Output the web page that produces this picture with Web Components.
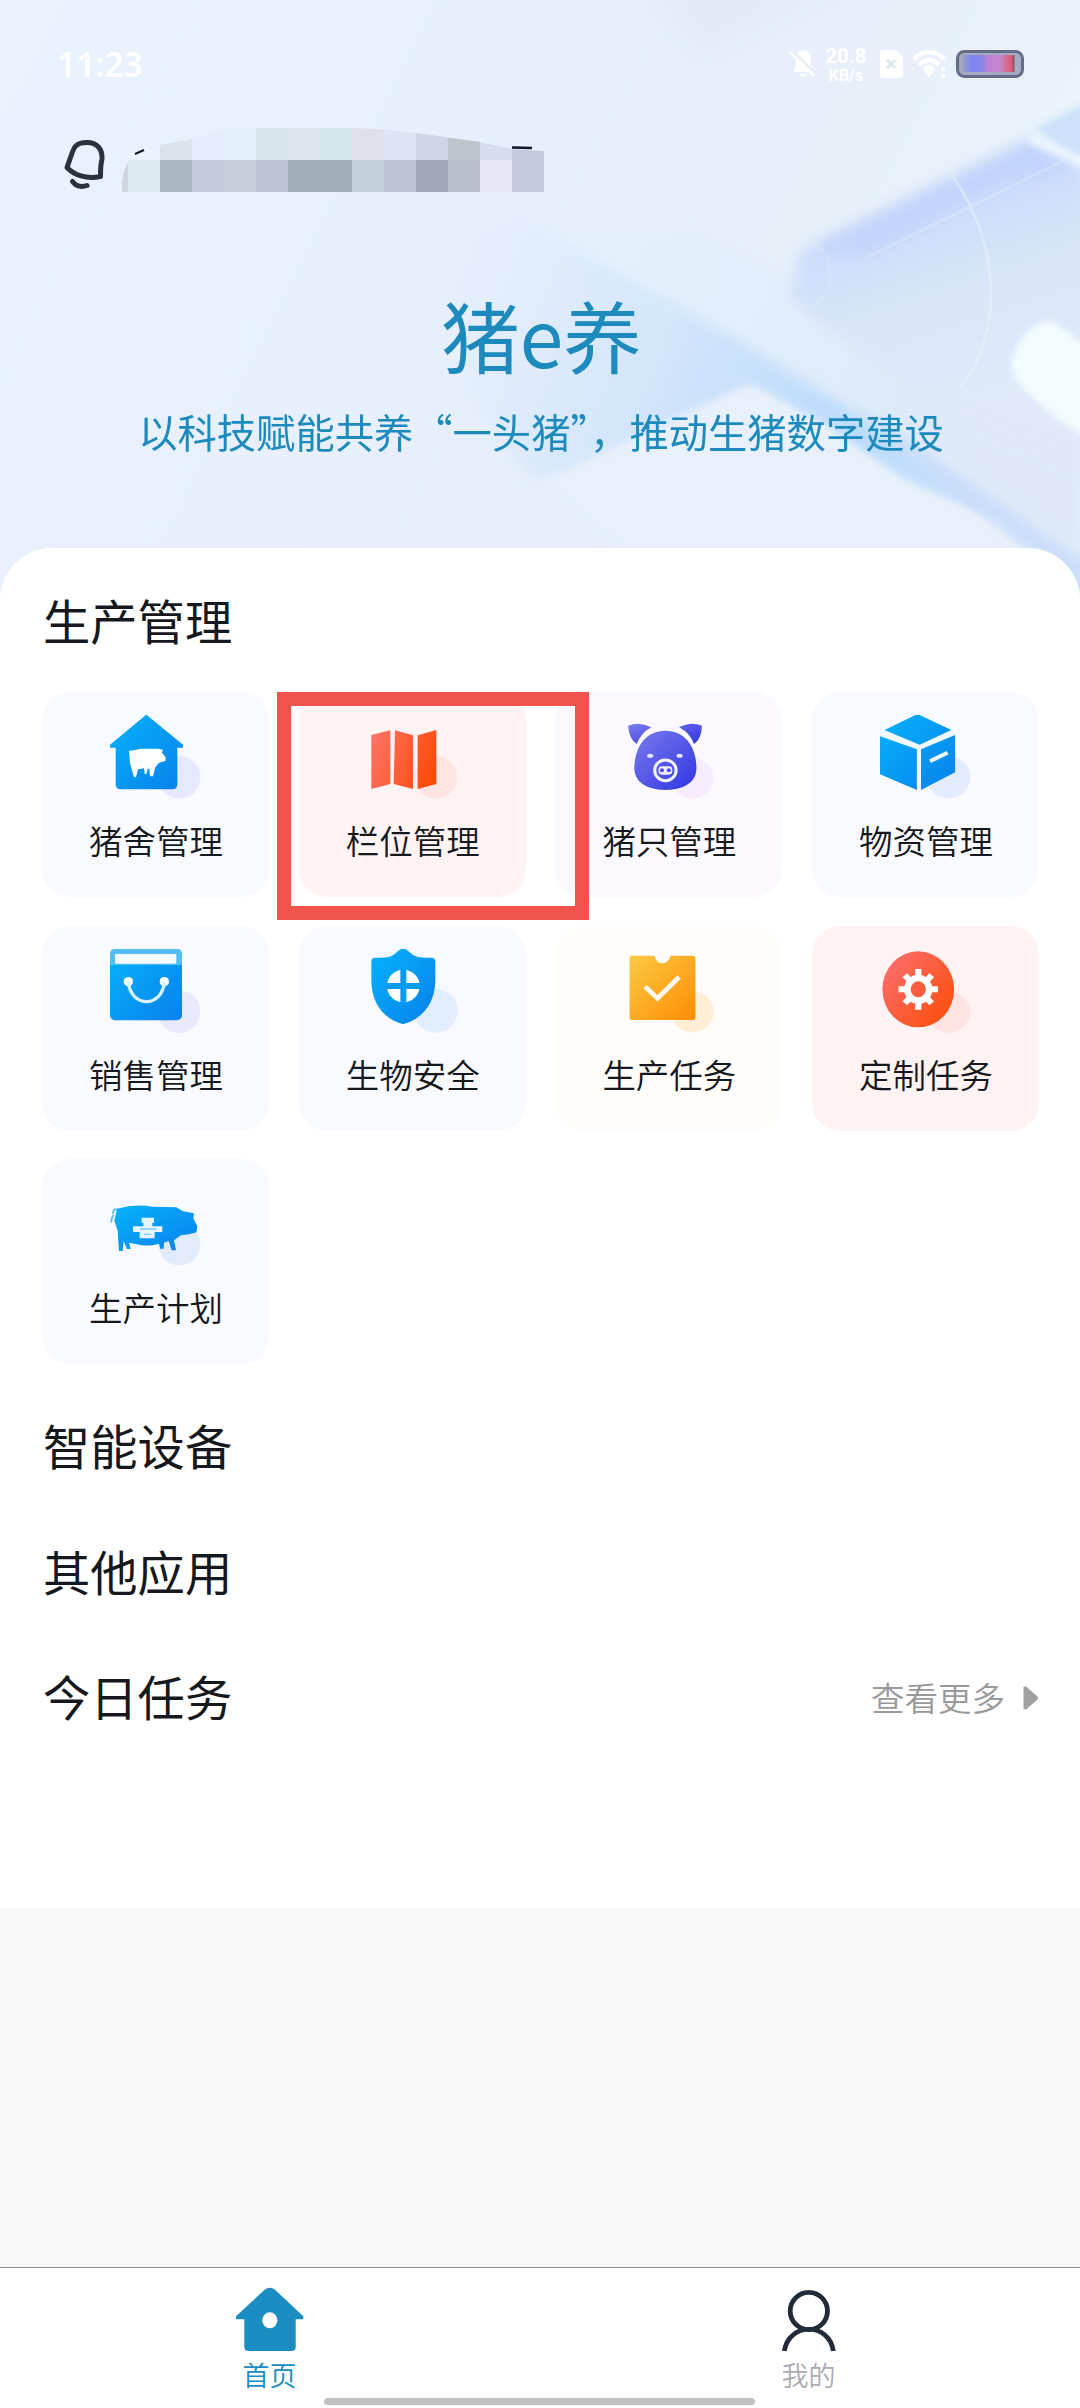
<!DOCTYPE html>
<html lang="zh-CN">
<head>
<meta charset="utf-8">
<title>猪e养</title>
<style>
html,body{margin:0;padding:0;background:#fff}
body{width:1080px;height:2408px;overflow:hidden;font-family:"Noto Sans CJK SC",sans-serif;color:#15181c}
</style>
</head>
<body>
<home-page></home-page>
<script>
const define=(name,html)=>customElements.define(name,class extends HTMLElement{
  constructor(){super();const t=document.createElement('template');t.innerHTML=html;
    this.attachShadow({mode:'open'}).append(t.content.cloneNode(true));}
});

define('hero-backdrop',`<style>:host{display:block;position:absolute;inset:0;z-index:0}svg{display:block}</style>
<svg width="1080" height="620" viewBox="0 0 1080 620">
<defs>
<linearGradient id="b" x1="0" x2="1" y2=".3"><stop offset="0" stop-color="#eaf2fd"/><stop offset=".55" stop-color="#e8effc"/><stop offset=".8" stop-color="#e8eff9"/><stop offset="1" stop-color="#e9f5fa"/></linearGradient>
<linearGradient id="r" gradientUnits="userSpaceOnUse" x1="420" y1="250" x2="1040" y2="520"><stop offset="0" stop-color="#dcecfc" stop-opacity="0"/><stop offset=".35" stop-color="#d3e6fc" stop-opacity=".9"/><stop offset=".7" stop-color="#b8dafb"/><stop offset="1" stop-color="#d6e4fa"/></linearGradient>
<linearGradient id="p" gradientUnits="userSpaceOnUse" x1="930" y1="190" x2="1000" y2="400"><stop offset="0" stop-color="#c9dafc"/><stop offset=".45" stop-color="#d8e5f8"/><stop offset="1" stop-color="#dfe9f9"/></linearGradient>
<linearGradient id="q" gradientUnits="userSpaceOnUse" x1="640" y1="230" x2="1000" y2="440"><stop offset="0" stop-color="#e4f0fc"/><stop offset="1" stop-color="#dce8f8"/></linearGradient>
<filter id="f1" x="-10%" y="-10%" width="120%" height="120%"><feGaussianBlur stdDeviation="3"/></filter>
<filter id="f3" x="-10%" y="-10%" width="120%" height="120%"><feGaussianBlur stdDeviation="7"/></filter>
<filter id="f2" x="-20%" y="-20%" width="140%" height="140%"><feGaussianBlur stdDeviation="14"/></filter>
</defs>
<rect width="1080" height="620" fill="url(#b)"/>
<path d="M640-20H860L700 60Z" fill="#e2ebf5" filter="url(#f2)"/>
<path d="M530 220L700 226 770 265 1080 430V580L900 450 600 290Z" fill="url(#q)" filter="url(#f3)"/>
<path d="M1090 100L1035 128 1080 165H1090Z" fill="#cde2fa" filter="url(#f1)"/>
<path d="M1030 140L1090 172V480L1000 450 790 300 800 252Z" fill="url(#p)" filter="url(#f3)"/>
<path d="M1030 140L1078 168 1050 172 990 190 870 256 808 248Z" fill="#bccffb" opacity=".55" filter="url(#f3)"/>
<path d="M440 240L520 215 600 262 730 335 1090 560V600L810 420 750 386 680 420 560 477 530 478 470 400Z" fill="url(#r)" filter="url(#f3)"/>
<path d="M750 386L830 428 900 480 1000 520 1090 600V620H700L545 482 680 418Z" fill="#e8f0fb" filter="url(#f1)"/>
<path d="M850 400L1090 565V600L960 500Z" fill="#c9ddfa" opacity=".7" filter="url(#f1)"/>
<path d="M960 420L1090 470V560L900 430Z" fill="#dfe9f9" opacity=".8" filter="url(#f3)"/>
<path d="M1050 320C1030 325 1010 345 1012 372 1030 402 1060 420 1090 440V348Z" fill="#f5fbfe" filter="url(#f1)"/>
<path d="M1030 138L1090 165" stroke="#eef7fe" stroke-width="8" filter="url(#f1)"/>
<g fill="none" stroke="#eaf3fd" stroke-width="3" opacity=".5"><path d="M952 175C1000 245 1005 330 960 388"/><path d="M1065 160L865 258" opacity=".5"/><ellipse cx="808" cy="275" rx="22" ry="32" opacity=".35"/></g>
</svg>`);

define('status-bar',`<style>
:host{display:flex;align-items:center;height:64px;padding:32px 56px 0 57px;color:#fff;font-family:"Noto Sans","Open Sans",sans-serif}
.time{font-size:33.5px;font-weight:600;line-height:64px;flex:1}
.icons{display:flex;align-items:center}
.net{display:flex;flex-direction:column;align-items:center;width:46px;margin:3px 9px 0 6px;font-family:Roboto,sans-serif;font-weight:700;font-size:20.500px;line-height:20.500px}
.net span+span{font-size:16px;line-height:18px}
svg{display:block}
</style>
<span class="time">11:23</span>
<span class="icons">
<svg width="28" height="30" viewBox="0 0 28 30"><path d="M14 1c5 0 8 4 8 9v9l3 4H4l3-5v-8c0-5 3-9 7-9zM11 25h6c0 4-6 4-6 0z" fill="#fff"/><path d="M3 1L27 25" stroke="#e7eef9" stroke-width="2.500"/><path d="M1 3L25 27" stroke="#fff" stroke-width="2"/></svg>
<span class="net"><span>20.8</span><span>KB/s</span></span>
<svg width="26" height="30" viewBox="0 0 26 30"><path d="M5 1h13l7 7v18q0 3-3 3H5q-3 0-3-3V4q0-3 3-3z" fill="#fff"/><path d="M9 11l8 8m0-8l-8 8" stroke="#dfe6f2" stroke-width="3"/></svg>
<svg width="36" height="30" viewBox="0 0 36 30" style="margin-left:8px"><path d="M2 10Q17-4 32 10M7 16Q17 6 27 16M12 21Q17 16 22 21" fill="none" stroke="#fff" stroke-width="4.500"/><path d="M12 22h10l-5 6zM29 18h4v4h-4zM29 25h4v4h-4z" fill="#fff"/></svg>
<svg width="68" height="28" viewBox="0 0 68 28" style="margin-left:8px"><defs><linearGradient id="g"><stop offset="0" stop-color="#9aa4c8"/><stop offset=".2" stop-color="#7b83f0"/><stop offset=".4" stop-color="#8d83e6"/><stop offset=".5" stop-color="#bd83da"/><stop offset=".75" stop-color="#c884c8"/><stop offset="1" stop-color="#e05560"/></linearGradient></defs><rect x="1.500" y="1.500" width="65" height="25" rx="7" fill="#a3aac2" stroke="#656d86" stroke-width="3"/><rect x="6" y="5" width="51" height="17" rx="2" fill="url(#g)"/><path d="M57.500 5v17" stroke="#87566f" stroke-width="2"/></svg>
</span>`);

define('user-line',`<style>:host{display:block;height:100px;padding:14px 0 0 40px}svg{display:block}</style>
<svg width="520" height="100" viewBox="0 0 520 100">
<g fill="none" stroke="#2b323f" stroke-width="5" stroke-linecap="round" stroke-linejoin="round"><path d="M31 46C34 36.500 36 32.500 47 32.500 58 32.500 62.500 40 62 49 61 53 60.500 58 60.500 66.500 46 69.500 34 65 27 57.500Z"/><path d="M32.500 71.500C36 76 41 77.500 47 75.500"/></g>
<defs><clipPath id="c"><path d="M82 82V72Q83 60 90 49L120 35 152 29 184 19 216 18H312L344 19.500 376 23 440 32 472 39 504 41V82Z"/></clipPath></defs>
<g clip-path="url(#c)" shape-rendering="crispEdges" id="m"></g>
<path d="M95 44L104 40" stroke="#111827" stroke-width="2"/><path d="M472 37.500L492 38" stroke="#111827" stroke-width="2.600"/>
</svg>`);
/* 32px blocks that hide the account name, two rows */
class NameMosaic extends customElements.get('user-line'){constructor(){super();
  const g=this.shadowRoot.getElementById('m');
  const rows=[['#eaf2fd','#d9e4eb','#e7ecfc','#e4f1fd','#d6e5ec','#dee4ed','#d4e6eb','#dfe0eb','#dde5f5','#cfd4e6','#bfc4cc','#d8dcef','#c7cade'],
              ['#dceaf2','#abb7c3','#c4cddd','#c4cfdb','#bbc3d4','#a2aeba','#a2aeba','#c3cfdb','#bcc4d5','#a0a9ba','#bbbfcb','#e6e9f5','#c7cade']];
  let s='<rect x="80" y="50" width="8" height="32" fill="#cfd6e0"/>';
  rows.forEach((r,j)=>r.forEach((c,i)=>s+=`<rect x="${88+i*32}" y="${18+j*32}" width="32" height="32" fill="${c}"/>`));
  g.innerHTML=s;}}
customElements.define('account-line',NameMosaic);

define('hero-title',`<style>
:host{display:flex;flex-direction:column;align-items:center;color:#1c8abc}
.t{font-size:78.500px;line-height:110px;margin:69px 0 0 3px;font-weight:400}
.s{font-size:39.300px;line-height:60px;margin:12px 0 0 2px;white-space:nowrap}
</style><div class="t"><slot name="title"></slot></div><div class="s"><slot></slot></div>`);

define('app-tile',`<style>
:host{display:flex;flex-direction:column;align-items:center;box-sizing:border-box;height:205px;padding-top:23px;border-radius:28px;background:var(--bg,#f9faff);font-size:33.500px;line-height:48px;font-weight:350}
.i{width:91px;height:84px}.l{margin:17px 0 0 1px;white-space:nowrap}
</style><div class="i"><slot name="icon"></slot></div><div class="l"><slot></slot></div>`);

define('section-head',`<style>
:host{display:flex;align-items:center;justify-content:space-between;height:70px;font-size:47.300px;line-height:70px}
.h{margin:-4px 0 0 1px}
</style><span class="h"><slot></slot></span><slot name="more"></slot>`);

define('more-link',`<style>:host{display:flex;align-items:center;gap:18px;font-size:33.500px;line-height:48px;color:#999;font-weight:350}svg{display:block}span{margin-top:-3px}</style>
<span><slot></slot></span><svg width="16" height="24" viewBox="0 0 16 24"><path d="M.5 1Q1 .5 3 .5L14 10Q16 12 14 14L3 23.500.5 23Z" fill="#a0a0a0"/></svg>`);

define('nav-item',`<style>:host{display:flex;flex:1;flex-direction:column;align-items:center;font-size:27px;line-height:38px;font-weight:350;padding-top:19px}
.i{height:65px}.l{margin-top:4px}</style><div class="i"><slot name="icon"></slot></div><div class="l"><slot></slot></div>`);

define('home-page',`<style>
:host{display:flex;flex-direction:column;position:relative;width:1080px;height:2408px;background:#f8f8f8;overflow:hidden}
header{position:relative;height:548px;flex:none}
.over{position:relative;z-index:1}
main{position:relative;z-index:1;box-sizing:border-box;height:1360px;flex:none;background:#fff;border-radius:52px 52px 0 0;padding:39px 41px 0 42px}
.grid{position:relative;display:grid;grid-template-columns:repeat(4,227px);column-gap:29.700px;row-gap:28.500px;margin:35px 0 48px}
.mark{position:absolute;left:235px;top:0;box-sizing:border-box;width:312px;height:228px;border:14px solid #f0524c;z-index:2}
.heads{display:flex;flex-direction:column;gap:55.500px}
.fill{flex:1}
nav{display:flex;box-sizing:border-box;height:141px;flex:none;background:#fff;border-top:1px solid #8f9096;position:relative;padding-right:2px}
.pill{position:absolute;left:324px;top:130px;width:431px;height:7px;border-radius:4px;background:#c1c1c4}
svg{display:block}
</style>
<header><hero-backdrop></hero-backdrop><div class="over"><status-bar></status-bar><account-line></account-line>
<hero-title><span slot="title">猪e养</span>以科技赋能共养“一头猪”，推动生猪数字建设</hero-title></div></header>
<main>
<svg width="0" height="0" style="position:absolute"><defs>
<linearGradient id="blue" x1="0" y1="0" x2="1" y2="1"><stop offset="0" stop-color="#05b3fb"/><stop offset="1" stop-color="#0880ec"/></linearGradient>
<linearGradient id="red" gradientUnits="userSpaceOnUse" x1="1055" y1="200" x2="1250" y2="270"><stop offset="0" stop-color="#fd7263"/><stop offset="1" stop-color="#fd4a08"/></linearGradient>
<linearGradient id="red2" x1="0" y1=".2" x2="1" y2="1"><stop offset="0" stop-color="#fb6d6b"/><stop offset="1" stop-color="#fd4b02"/></linearGradient>
<linearGradient id="vio" x1="0" y1="0" x2="1" y2="1"><stop offset="0" stop-color="#7a7bed"/><stop offset="1" stop-color="#2f35e2"/></linearGradient>
<linearGradient id="ora" x1="0" y1="0" x2="1" y2="1"><stop offset="0" stop-color="#fdc945"/><stop offset="1" stop-color="#fd8d02"/></linearGradient>
</defs></svg>
<section-head>生产管理</section-head>
<div class="grid">
<app-tile><svg slot="icon" width="91" height="84" viewBox="273 105 273 252" preserveAspectRatio="none"><circle cx="480" cy="292" r="64" fill="#e5e8fe"/><path d="M382 104L492 194V203H475V312Q475 328 460 328H305Q290 328 290 312V203H273V194Z" fill="url(#blue)"/><path d="M330 212Q345 212 365 206H418L432 210 428 217 440 232 439 243 420 248 409 262 402 289H393L391 266H386L382 283 377 281 375 265 357 268 351 292H345L333 250Z" fill="#fff"/></svg>猪舍管理</app-tile>
<app-tile style="--bg:#fff3f3"><svg slot="icon" width="91" height="84" viewBox="1044 105 273 252" preserveAspectRatio="none"><circle cx="1250" cy="292" r="64" fill="#ffe4e2"/><path d="M1057 165L1114 151V312L1057 327ZM1128 151L1182 166V327L1124 312ZM1196 166L1252 150V312L1196 327Z" fill="url(#red)"/></svg>栏位管理</app-tile>
<app-tile style="--bg:#fcf8ff"><svg slot="icon" width="91" height="84" viewBox="247 105 264 252" preserveAspectRatio="none"><circle cx="448" cy="295" r="61" fill="#f6ebff"/><path d="M262 137Q295 123 329 142Q298 160 287 192Q264 176 262 137ZM476 137Q444 123 410 142Q442 160 453 192Q475 176 476 137Z" fill="url(#vio)"/><path d="M370 152C430 152 460 205 460 265C460 312 415 330 370 330S280 312 280 265C280 205 310 152 370 152Z" fill="url(#vio)"/><circle cx="370" cy="271" r="31" fill="none" stroke="#f2efff" stroke-width="9"/><rect x="350" y="259" width="40" height="25" rx="10" fill="#eeecff"/><circle cx="360" cy="271" r="6" fill="#4c4fe2"/><circle cx="380" cy="271" r="6" fill="#4c4fe2"/><ellipse cx="326" cy="227" rx="9" ry="6" fill="#e8e6ff"/><ellipse cx="411" cy="227" rx="9" ry="6" fill="#e8e6ff"/></svg>猪只管理</app-tile>
<app-tile><svg slot="icon" width="91" height="84" viewBox="993 105 264 252" preserveAspectRatio="none"><circle cx="1192" cy="292" r="63" fill="#e5ebfe"/><path d="M993 158L1102 102 1211 158V277L1116 331H1096L993 283Z" fill="#eff7ff"/><path d="M1102 102L1200 150 1108 194 1006 150ZM993 169L1100 208V330L993 283ZM1112 208L1211 165V277L1112 330Z" fill="url(#blue)"/><path d="M1138 244L1189 218" stroke="#eef7ff" stroke-width="12"/></svg>物资管理</app-tile>
<app-tile><svg slot="icon" width="91" height="84" viewBox="273 117 273 252" preserveAspectRatio="none"><circle cx="480" cy="305" r="64" fill="#e9e8fe"/><rect x="273" y="117" width="216" height="214" rx="16" fill="url(#blue)"/><path d="M289 117H473Q489 117 489 133V165H273V133Q273 117 289 117Z" fill="#55bdf4"/><rect x="288" y="132" width="184" height="29" rx="4" fill="#f2faff"/><g fill="#fff"><circle cx="328" cy="215" r="14"/><circle cx="436" cy="215" r="14"/></g><path d="M328 215C335 295 430 295 436 215" fill="none" stroke="#d9f2ff" stroke-width="10"/></svg>销售管理</app-tile>
<app-tile><svg slot="icon" width="91" height="84" viewBox="1044 117 273 252" preserveAspectRatio="none"><circle cx="1250" cy="302" r="66" fill="#e2edff"/><path d="M1152 114Q1164 118 1179 133 1196 146 1240 143 1249 144 1249 155V210C1249 285 1205 328 1152 343C1099 328 1057 285 1057 210V155Q1057 144 1066 143 1111 146 1126 133 1141 118 1152 114Z" fill="url(#blue)"/><circle cx="1153" cy="228" r="49" fill="#fff"/><path d="M1153 176V280M1101 228H1205" stroke="#0b9bf4" stroke-width="18"/></svg>生物安全</app-tile>
<app-tile style="--bg:#fffdf9"><svg slot="icon" width="91" height="84" viewBox="247 117 264 252" preserveAspectRatio="none"><circle cx="448" cy="305" r="62" fill="#ffedd6"/><path d="M272 137H338Q345 160 361 160T385 137H450Q457 137 457 144V323Q457 330 450 330H272Q266 330 266 323V144Q266 137 272 137Z" fill="url(#ora)"/><path d="M311 230L347 265 410 201" fill="none" stroke="#fffaf0" stroke-width="14"/></svg>生产任务</app-tile>
<app-tile style="--bg:#fff2f2"><svg slot="icon" width="91" height="84" viewBox="993 117 264 252" preserveAspectRatio="none"><circle cx="1192" cy="306" r="62" fill="#ffe2e2"/><ellipse cx="1104" cy="238" rx="104" ry="114" fill="url(#red2)"/><g stroke="#fff" stroke-width="18"><path d="M1104 177V299M1047 238H1161M1065 196L1143 280M1143 196L1065 280"/></g><ellipse cx="1104" cy="238" rx="41" ry="44" fill="#fff"/><ellipse cx="1104" cy="238" rx="22" ry="24" fill="#fc5c3e"/></svg>定制任务</app-tile>
<app-tile><svg slot="icon" width="91" height="84" viewBox="273 129 273 252" preserveAspectRatio="none"><circle cx="481" cy="316" r="63" fill="#e2ebfa"/><path d="M283 225Q280 210 296 210M284 228Q275 238 277 251" fill="none" stroke="#68bff5" stroke-width="6"/><path d="M294 209Q350 194 400 203L472 205 492 217 525 223 523 238 535 262 532 280 510 286 486 289 465 304 471 334H458L449 306 435 311 434 329H424L420 314Q385 325 350 315L330 311 335 330H324L314 307 311 336H300L296 275 286 245Z" fill="url(#blue)"/><path d="M368 236H405V251H400V262H430V279H407V298H362V279H342V262H373V251H368Z" fill="#e5f5ff"/><path d="M363 270H412M374 286H397" stroke="#83c9f6" stroke-width="4"/></svg>生产计划</app-tile>
<div class="mark"></div>
</div>
<div class="heads"><section-head>智能设备</section-head><section-head>其他应用</section-head>
<section-head>今日任务<more-link slot="more">查看更多</more-link></section-head></div>
</main>
<div class="fill"></div>
<nav>
<nav-item style="color:#1a8cc4"><svg slot="icon" width="68" height="65" viewBox="685 111 197 195" preserveAspectRatio="none"><path d="M768 119Q783 107 798 119L880 199V208H858V290Q858 303 845 303H722Q709 303 709 290V208H685V199Z" fill="#1c8dc2"/><ellipse cx="783" cy="211" rx="22" ry="24" fill="#fff"/></svg>首页</nav-item>
<nav-item style="color:#abacb2"><svg slot="icon" width="68" height="65" viewBox="685 111 197 195" preserveAspectRatio="none"><g fill="none" stroke="#222c38" stroke-width="14"><ellipse cx="783" cy="183" rx="54" ry="56"/><path d="M712 303C725 216 842 216 854 303"/></g></svg>我的</nav-item>
<div class="pill"></div>
</nav>`);
</script>
</body>
</html>
